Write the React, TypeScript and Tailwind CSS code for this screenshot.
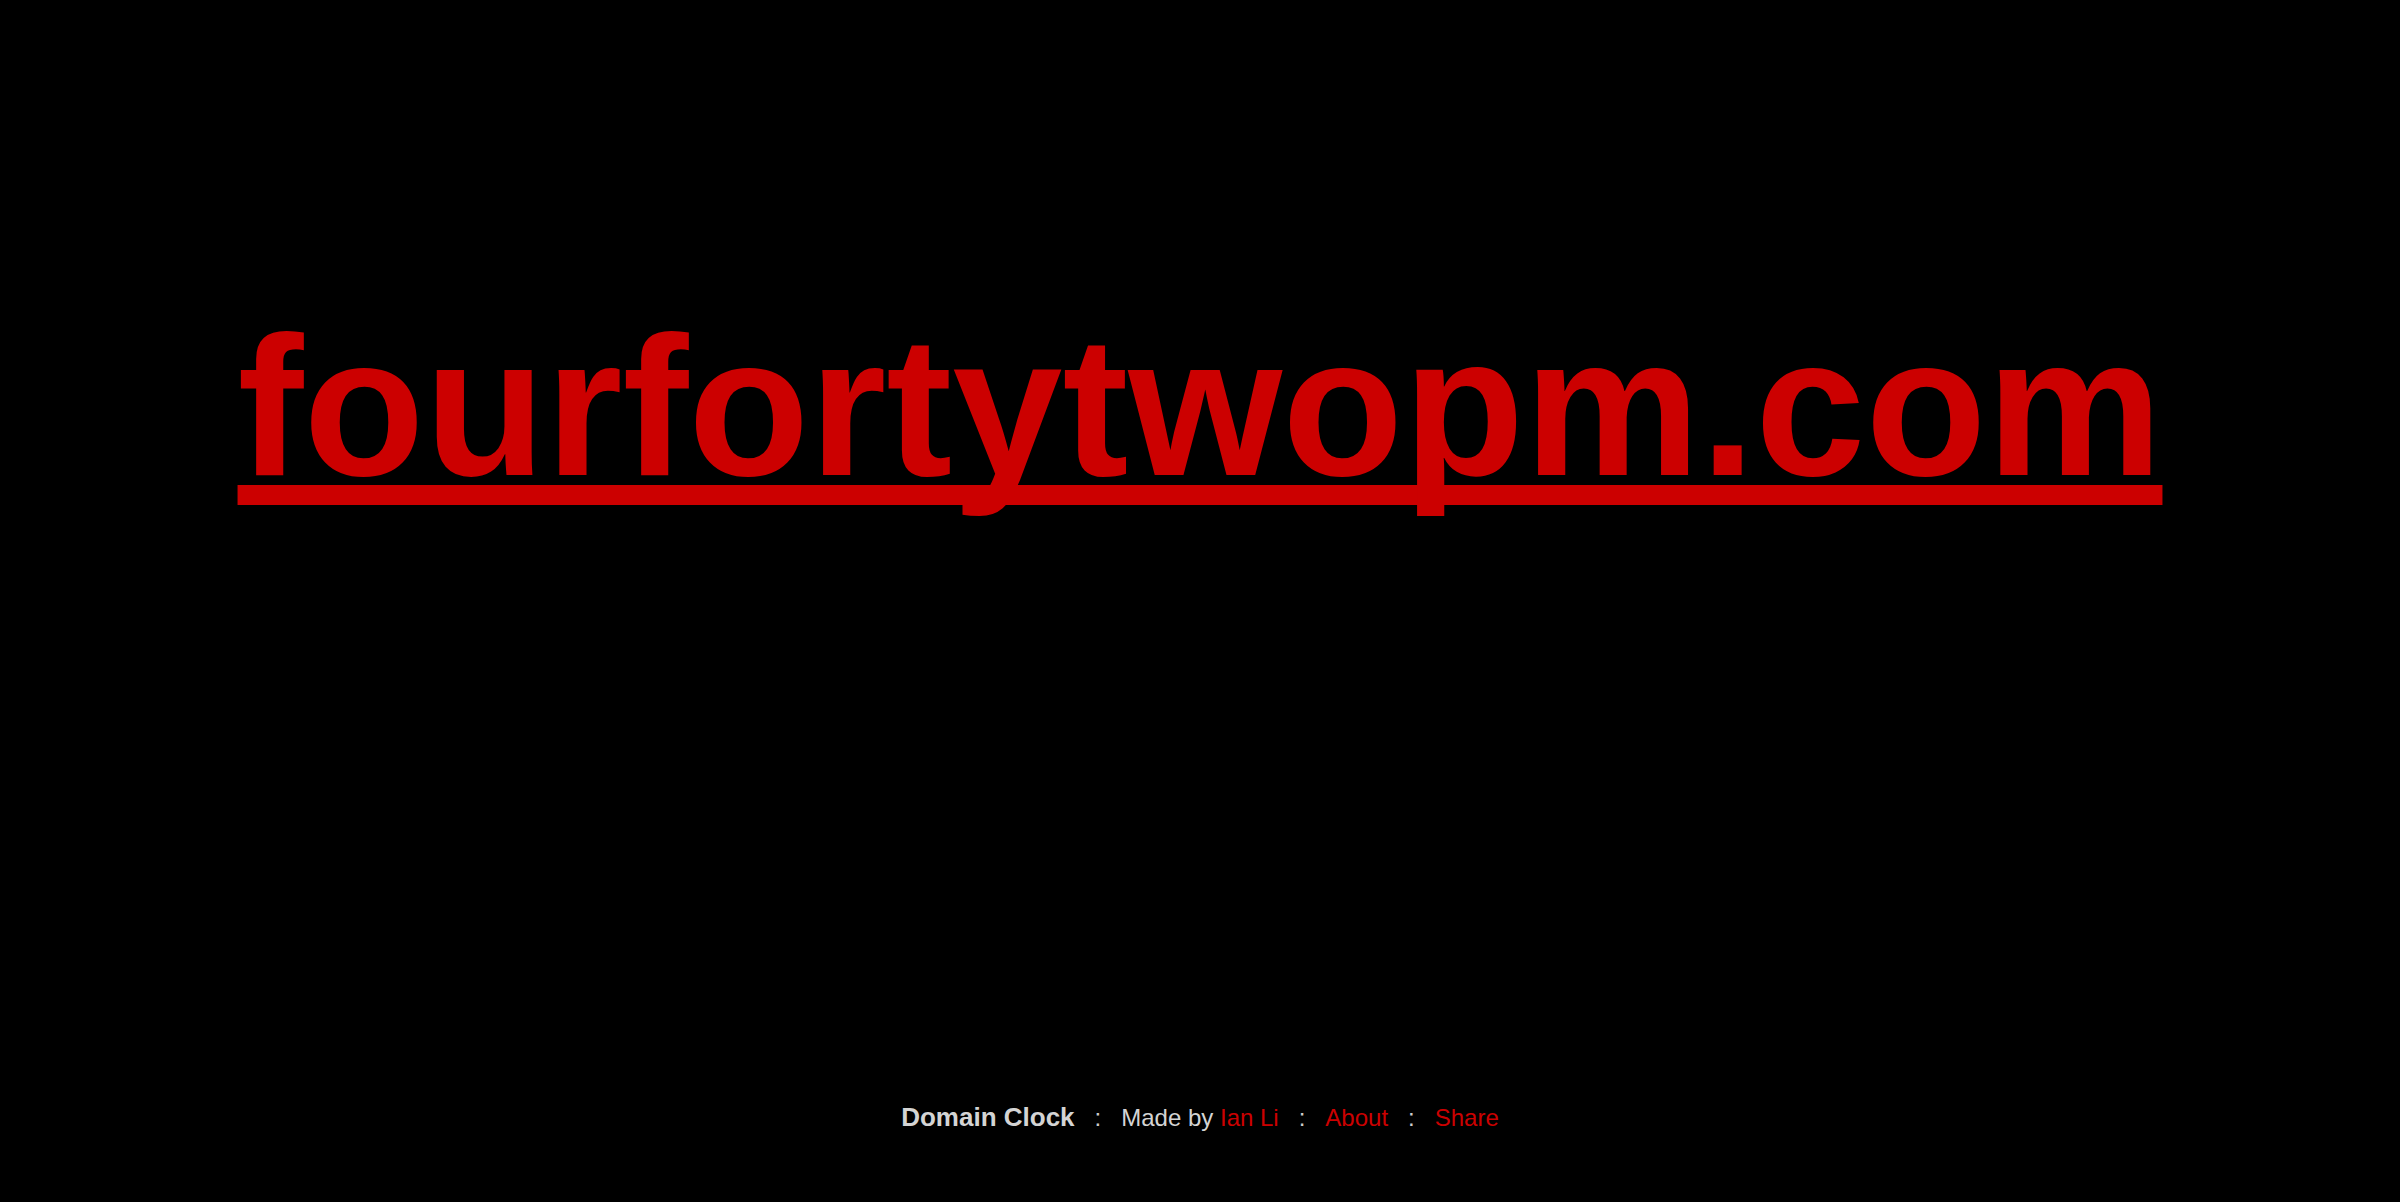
import React from 'react';

const Sep = () => <span className="mx-[20px] text-[#cccccc]">:</span>;

const App = () => {
  return (
    <div className="h-screen bg-black flex flex-col items-center font-['Liberation_Sans',Arial,sans-serif]">
      <main className="flex-1 w-full flex justify-center pt-[308px]">
        <a
          href="#"
          className="text-[198px] leading-none font-bold text-[#cc0000] underline decoration-[20px] underline-offset-[10px] [text-decoration-skip-ink:none]"
        >
          fourfortytwopm.com
        </a>
      </main>

      <footer className="pb-[72px] flex items-baseline text-[24px] leading-none text-[#d4d4d4]">
        <span className="font-bold text-[26px]">Domain Clock</span>
        <Sep />
        <span>
          Made by <a href="#" className="text-[#cc0000]">Ian Li</a>
        </span>
        <Sep />
        <a href="#" className="text-[#cc0000]">About</a>
        <Sep />
        <a href="#" className="text-[#cc0000]">Share</a>
      </footer>
    </div>
  );
};

export default App;
